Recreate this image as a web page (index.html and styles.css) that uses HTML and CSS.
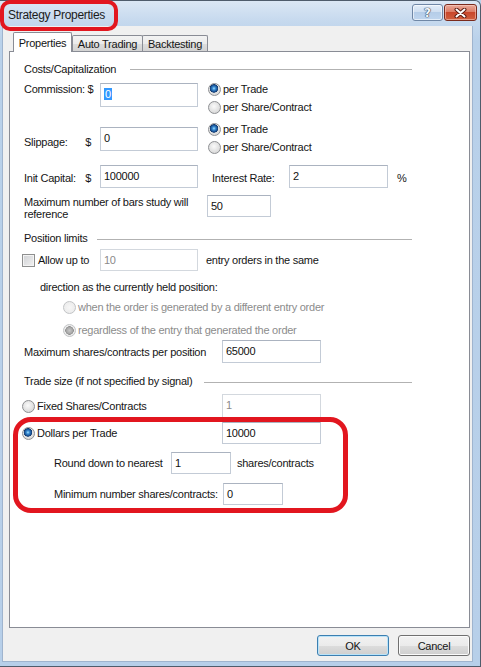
FILE: index.html
```html
<!DOCTYPE html>
<html>
<head>
<meta charset="utf-8">
<title>Strategy Properties</title>
<link rel="stylesheet" href="styles.css">
</head>
<body>
<div class="window">
  <div class="titlebar">
    <span class="title">Strategy Properties</span>
    <div class="caption-btns">
      <div class="cbtn help">?</div>
      <div class="cbtn close">
        <svg width="13" height="10" viewBox="0 0 13 10"><path d="M2.5 1.5 L10.5 8.5 M10.5 1.5 L2.5 8.5" stroke="#5a1a10" stroke-width="4" stroke-linecap="round" fill="none"/><path d="M2.5 1.5 L10.5 8.5 M10.5 1.5 L2.5 8.5" stroke="#fff" stroke-width="2" stroke-linecap="round" fill="none"/></svg>
      </div>
    </div>
  </div>
  <div class="client">
    <div class="tabs">
      <div class="tab active">Properties</div>
      <div class="tab t-auto">Auto Trading</div>
      <div class="tab t-back">Backtesting</div>
    </div>
    <div class="panel">
      <div class="grp g-costs"><span>Costs/Capitalization</span><span class="line"></span></div>

      <div class="row r-comm">
        <div class="lbl-cell lc-comm"><span>Commission: $</span></div>
        <div class="tb tb-wide tb-comm"><span class="sel">0</span></div>
        <div class="radios">
          <div class="opt"><span class="radio on"></span>per Trade</div>
          <div class="opt"><span class="radio"></span>per Share/Contract</div>
        </div>
      </div>

      <div class="row r-slip">
        <div class="lbl-cell lc-slip"><span>Slippage:</span><span class="dollar">$</span></div>
        <div class="tb tb-wide tb-slip">0</div>
        <div class="radios">
          <div class="opt"><span class="radio on"></span>per Trade</div>
          <div class="opt"><span class="radio"></span>per Share/Contract</div>
        </div>
      </div>

      <div class="row r-init">
        <div class="lbl-cell"><span>Init Capital:</span><span class="dollar">$</span></div>
        <div class="tb tb-wide">100000</div>
        <span class="rate-lbl">Interest Rate:</span>
        <div class="tb tb-rate">2</div>
        <span class="pct">%</span>
      </div>

      <div class="row r-bars">
        <div class="bars-lbl">Maximum number of bars study will reference</div>
        <div class="tb tb-bars">50</div>
      </div>

      <div class="grp g-pos"><span>Position limits</span><span class="line"></span></div>

      <div class="row r-allow">
        <span class="chk"></span>
        <span class="allow-lbl">Allow up to</span>
        <div class="tb tb-wide tb-allow disabled">10</div>
        <span class="entry-lbl">entry orders in the same</span>
      </div>

      <div class="row r-dir">direction as the currently held position:</div>

      <div class="row r-when opt dis"><span class="radio dis"></span>when the order is generated by a different entry order</div>
      <div class="row r-regard opt dis"><span class="radio dis on"></span>regardless of the entry that generated the order</div>

      <div class="row r-maxsh">
        <span class="maxsh-lbl">Maximum shares/contracts per position</span>
        <div class="tb tb-size">65000</div>
      </div>

      <div class="grp g-trade"><span>Trade size (if not specified by signal)</span><span class="line"></span></div>

      <div class="row r-fixed">
        <div class="opt size-opt"><span class="radio"></span>Fixed Shares/Contracts</div>
        <div class="tb tb-size tb-fixed disabled">1</div>
      </div>

      <div class="row r-dollars">
        <div class="opt size-opt"><span class="radio on"></span>Dollars per Trade</div>
        <div class="tb tb-size tb-dollars">10000</div>
      </div>

      <div class="row r-round">
        <span class="round-lbl">Round down to nearest</span>
        <div class="tb tb-short">1</div>
        <span class="unit-lbl">shares/contracts</span>
      </div>

      <div class="row r-min">
        <span class="min-lbl">Minimum number shares/contracts:</span>
        <div class="tb tb-short">0</div>
      </div>
    </div>
    <div class="buttons">
      <div class="btn default">OK</div>
      <div class="btn">Cancel</div>
    </div>
  </div>
  <div class="annot annot-title"></div>
  <div class="annot annot-trade"></div>
</div>
</body>
</html>
```

FILE: styles.css
```css
* { box-sizing: border-box; }
html, body { margin: 0; padding: 0; }
body {
  width: 481px;
  height: 667px;
  overflow: hidden;
  font-family: "Liberation Sans", Arial, sans-serif;
  font-size: 11px;
  letter-spacing: -0.25px;
  color: #151515;
  background: #b9d1ea;
}
.window {
  position: relative;
  width: 481px;
  height: 667px;
  display: flex;
  flex-direction: column;
  background: linear-gradient(#dbe7f4 0, #c6d9ee 20px, #b9d1ea 40px, #b7cfe9 100%);
  border: 1px solid #4f5c6b;
  border-left: none;
  border-top-right-radius: 6px;
}
.titlebar {
  height: 25px;
  display: flex;
  align-items: flex-start;
  flex-shrink: 0;
}
.title {
  margin: 7px 0 0 8px;
  font-size: 12px;
  line-height: 14px;
  letter-spacing: -0.3px;
  color: #1b1b1b;
}
.caption-btns {
  margin: 3px 3px 0 auto;
  display: flex;
  gap: 1px;
}
.cbtn {
  height: 17px;
  border-radius: 3px;
  display: flex;
  align-items: center;
  justify-content: center;
}
.help {
  width: 31px;
  border: 1px solid #6f87a6;
  background: linear-gradient(#e4eef9 0, #cfdff1 45%, #b5cde8 50%, #bfd5ee 100%);
  box-shadow: inset 0 0 0 1px rgba(255,255,255,0.6);
  font: bold 12px "DejaVu Sans", sans-serif;
  color: #f5f8fc;
  text-shadow: 0 0 1px #2d3f57, 0 0 1px #2d3f57, 0 0 1px #2d3f57;
  letter-spacing: 0;
}
.close {
  width: 33px;
  border: 1px solid #7a2a1c;
  background: linear-gradient(#eaa898 0, #dc7d66 45%, #c9472b 50%, #d0603f 100%);
  box-shadow: inset 0 0 0 1px rgba(255,220,210,0.5);
}
.client {
  flex: 1;
  margin: 0 7px 4px 2px;
  background: #f0f0f0;
  border: 1px solid #9fb4ce;
  border-top: none;
  padding: 6px 2px 0 6px;
  display: flex;
  flex-direction: column;
}
.tabs {
  display: flex;
  align-items: flex-end;
  height: 20px;
  padding-left: 4px;
  position: relative;
  z-index: 1;
}
.tab {
  height: 16px;
  margin-bottom: 1px;
  border: 1px solid #898c95;
  border-bottom: none;
  border-radius: 2px 2px 0 0;
  background: linear-gradient(#f3f3f3 0, #ebebeb 50%, #dddddd 51%, #d3d3d3 100%);
  text-align: center;
  line-height: 14px;
  padding-top: 1px;
}
.tab.active {
  width: 59px;
  height: 20px;
  margin-bottom: 0;
  background: #fff;
  padding-top: 3px;
}
.t-auto { width: 71px; }
.t-back { width: 66px; margin-left: -1px; }
.panel {
  width: 461px;
  height: 577px;
  margin-top: -1px;
  border: 1px solid #898c95;
  background: #fff;
  flex-shrink: 0;
}
.buttons {
  display: flex;
  justify-content: flex-end;
  gap: 9px;
  margin-top: 7px;
  width: 461px;
}
.btn {
  width: 72px;
  height: 21px;
  border: 1px solid #707070;
  border-radius: 3px;
  background: linear-gradient(#f2f2f2 0, #ebebeb 50%, #dddddd 51%, #cfcfcf 100%);
  box-shadow: inset 0 0 0 1px #fbfbfb;
  display: flex;
  align-items: center;
  justify-content: center;
  font-size: 11px;
}
.btn.default {
  border-color: #3c7fb1;
  box-shadow: inset 0 0 0 1px #b9e3f9;
}

/* group headers */
.grp {
  display: flex;
  align-items: center;
  height: 14px;
  margin: 0 57px 0 14px;
  line-height: 14px;
}
.grp .line {
  flex: 1;
  height: 0;
  border-top: 1px solid #b2b2b2;
  margin-left: 14px;
}
.g-costs { margin-top: 10px; }
.g-pos { margin-top: 11px; }
.g-pos .line { margin-left: 9px; margin-top: 2px; }
.g-trade { margin-top: 11px; }
.g-trade .line { margin-left: 12px; margin-top: 2px; }

.row {
  display: flex;
  align-items: center;
  line-height: 14px;
}
.lbl-cell {
  width: 76px;
  display: flex;
  margin-left: 14px;
  white-space: nowrap;
}
.dollar { margin-left: auto; margin-right: 9px; }

.tb {
  height: 23px;
  border: 1px solid #c3cbd6;
  border-top-color: #abb3c0;
  background: #fff;
  padding: 3px 3px 0 3px;
  line-height: 14px;
  color: #111;
  flex-shrink: 0;
}
.tb.disabled { color: #8a8a8a; border-color: #d3d8de; }
.tb-wide { width: 98px; }
.tb-rate { width: 99px; }
.tb-bars { width: 64px; height: 22px; }
.tb-size { width: 99px; margin-left: 0; }
.tb-short { width: 60px; height: 22px; }
.sel { background: #3399ff; color: #fff; padding: 0 1px; }

.radios { display: flex; flex-direction: column; margin-left: 10px; }
.opt {
  display: flex;
  align-items: center;
  height: 18px;
  gap: 2px;
}
.radio {
  width: 13px;
  height: 13px;
  border-radius: 50%;
  border: 1px solid #8e9093;
  background: radial-gradient(circle at 45% 40%, #fafafa 0, #e6e6e6 45%, #cfcfcf 100%);
  flex-shrink: 0;
}
.radio.on {
  background:
    radial-gradient(circle at 45% 40%, #a8e2ff 0, #3b8fd4 1.5px, #1d5aa0 3px, #10386c 4px, transparent 4.5px),
    radial-gradient(circle at 45% 40%, #fafafa 0, #e6e6e6 45%, #cfcfcf 100%);
}
.radio.dis { border-color: #c2c4c6; background: radial-gradient(circle, #f6f6f6 0, #e9e9e9 100%); }
.radio.dis.on {
  background:
    radial-gradient(circle, #c8c8c8 0, #a8a8a8 3px, #8e8e8e 4px, transparent 4.5px),
    radial-gradient(circle, #f6f6f6 0, #e9e9e9 100%);
}
.opt.dis { color: #8c8c8c; }

.chk {
  width: 13px;
  height: 13px;
  border: 1px solid #8e8f8f;
  background: linear-gradient(135deg, #cfd1d4 0, #f2f2f2 100%);
  box-shadow: inset 0 0 0 1px #f4f4f4;
  flex-shrink: 0;
}

/* rows */
.r-comm { margin-top: 4px; height: 35px; align-items: flex-start; }
.r-comm .lbl-cell { margin-top: 2px; }
.tb-comm { margin-top: 3px; height: 24px; }
.r-slip { margin-top: 5px; height: 36px; align-items: flex-start; }
.r-slip .lbl-cell { margin-top: 15px; }
.tb-slip { margin-top: 7px; height: 24px; }
.r-init { margin-top: 9px; height: 23px; }
.r-init .lbl-cell { margin-top: 3px; }
.rate-lbl { width: 77px; margin-left: 14px; margin-top: 3px; }
.pct { margin-left: 9px; margin-top: 3px; }
.r-bars { margin-top: 7px; height: 25px; align-items: flex-start; }
.bars-lbl { width: 183px; margin-left: 14px; margin-top: 1px; line-height: 12px; }
.r-allow { margin-top: 4px; height: 22px; padding-left: 12px; }
.allow-lbl { width: 62px; margin-left: 3px; }
.tb-allow { height: 22px; }
.entry-lbl { margin-left: 8px; }
.r-dir { margin-top: 9px; height: 14px; padding-left: 30px; }
.r-when { margin-top: 4px; padding-left: 53px; }
.r-regard { margin-top: 5px; padding-left: 53px; }
.r-maxsh { margin-top: 1px; height: 23px; }
.maxsh-lbl { width: 198px; margin-left: 14px; }
.r-maxsh .tb { height: 23px; }
.r-fixed { margin-top: 6px; height: 24px; padding-left: 12px; }
.tb-fixed { height: 24px; }
.size-opt { width: 200px; }
.r-dollars { margin-top: 4px; height: 22px; padding-left: 12px; }
.tb-dollars { height: 22px; }
.r-round { margin-top: 8px; height: 22px; padding-left: 44px; }
.round-lbl { width: 117px; }
.unit-lbl { margin-left: 6px; }
.r-min { margin-top: 9px; height: 22px; padding-left: 44px; }
.min-lbl { width: 169px; }

/* red annotation marks drawn over the screenshot */
.annot {
  position: absolute;
  border: 4px solid #e2161f;
  pointer-events: none;
  z-index: 5;
}
.annot-title { left: 0; top: -1px; width: 118px; height: 31px; border-radius: 10px; }
.annot-trade { left: 13px; top: 416px; width: 335px; height: 96px; border-width: 5px; border-radius: 18px; }
```
